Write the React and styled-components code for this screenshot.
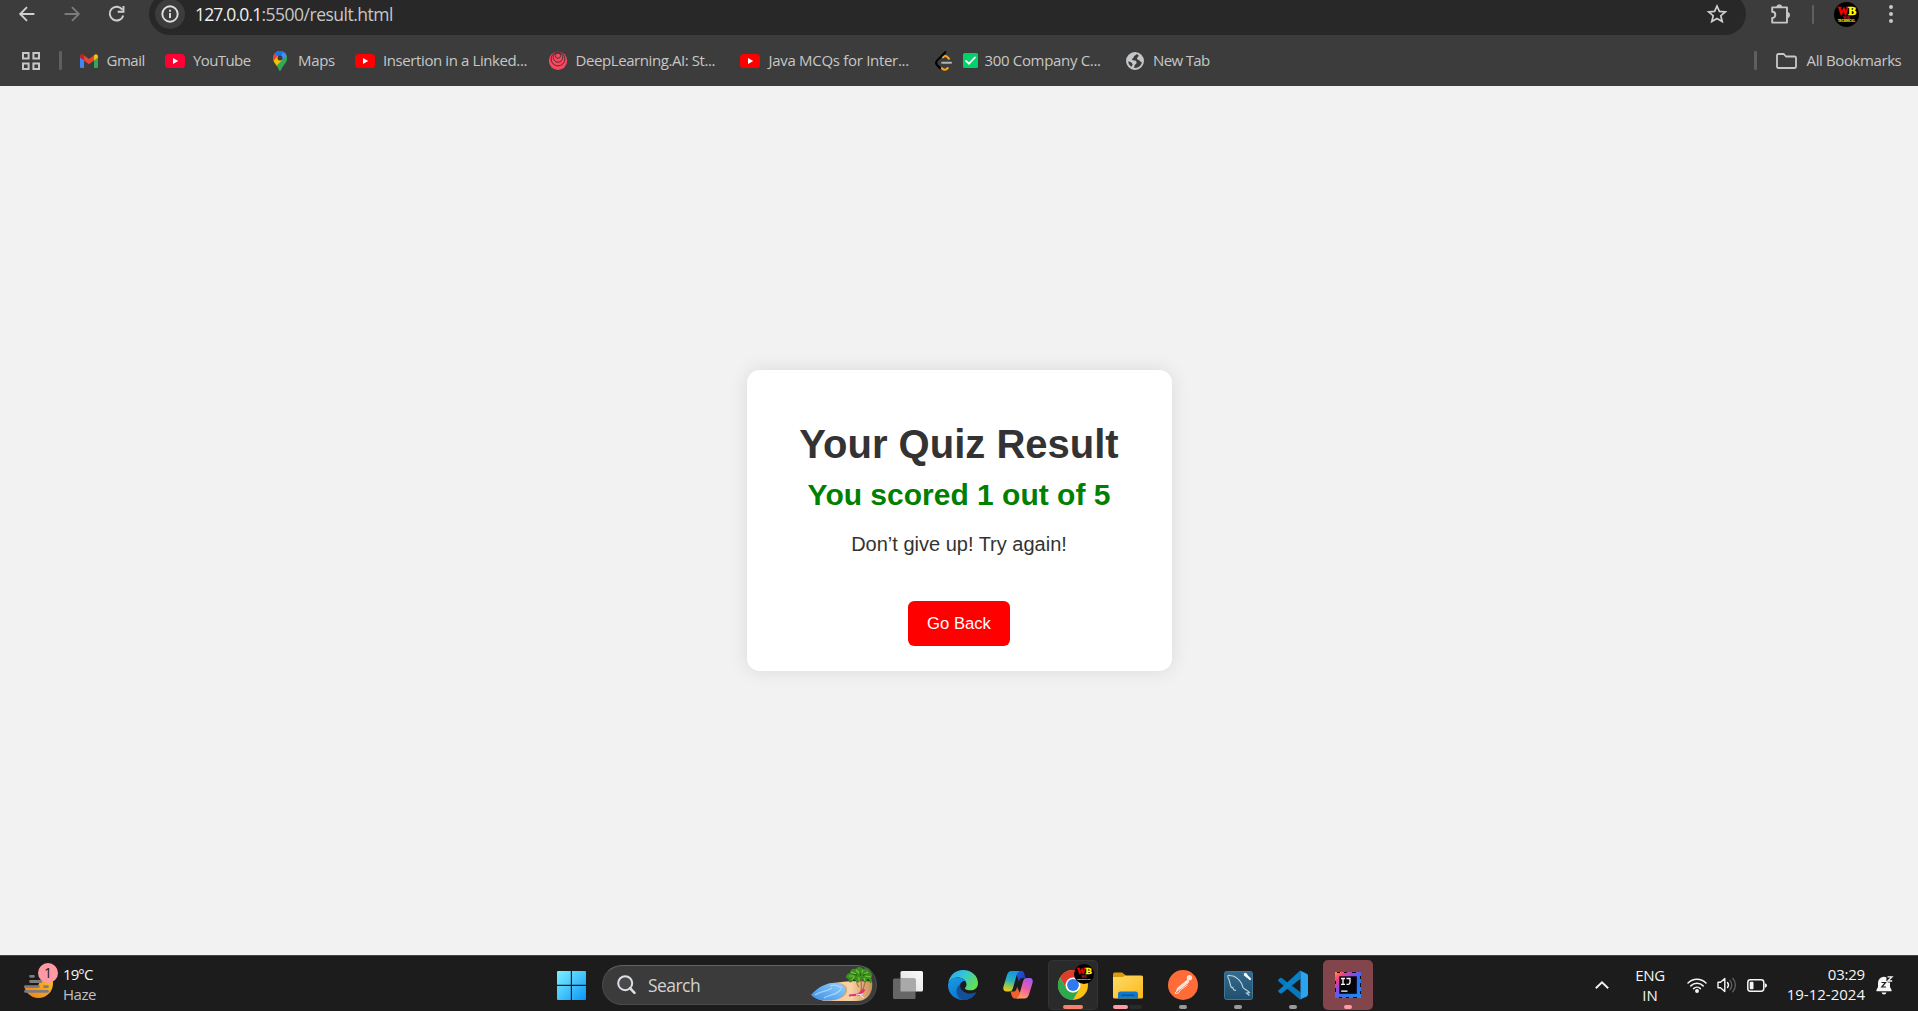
import React from "react";
import styled, { createGlobalStyle } from "styled-components";

const GlobalStyle = createGlobalStyle`
  * { box-sizing: border-box; }
  body { margin: 0; overflow: hidden; background: #f2f2f2; }
  svg { display: block; flex: none; overflow: visible; }
`;

const Screen = styled.div`
  width: 100vw;
  height: 100vh;
  display: flex;
  flex-direction: column;
  font-family: "Open Sans", "Noto Sans", sans-serif;
`;

/* ---------- browser chrome ---------- */

const BrowserBar = styled.header`
  flex: none;
  height: 86px;
  background: #3c3c3c;
  overflow: hidden;
`;

const Toolbar = styled.div`
  display: flex;
  align-items: center;
  height: 28px;
  padding-left: 4px;
`;

const NavButton = styled.div`
  flex: none;
  width: 45px;
  display: flex;
  justify-content: center;
  color: ${(p) => (p.$disabled ? "#7b7b7b" : "#d0d0d0")};
`;

const Omnibox = styled.div`
  flex: none;
  width: 1597px;
  height: 42px;
  margin-left: 10px;
  padding: 0 17px 0 6px;
  border-radius: 21px;
  background: #282828;
  display: flex;
  align-items: center;
`;

const SiteInfo = styled.div`
  width: 30px;
  height: 30px;
  border-radius: 50%;
  background: #3c3c3c;
  display: flex;
  align-items: center;
  justify-content: center;
`;

const Label = styled.span`
  flex: none;
  white-space: pre;
  font-size: ${(p) => p.$size || 15}px;
  line-height: 20px;
  letter-spacing: ${(p) => p.$track || 0}px;
  color: ${(p) => p.$color || "#c7c7c7"};
`;

const Url = styled.div`
  flex: 1;
  margin-left: 10px;
  display: flex;
`;

const Slot = styled.div`
  flex: none;
  width: ${(p) => p.$w}px;
  margin-left: ${(p) => p.$ml || 0}px;
  display: flex;
  justify-content: center;
`;

const Divider = styled.div`
  flex: none;
  width: ${(p) => p.$w}px;
  height: 19px;
  margin-left: ${(p) => p.$ml}px;
  border-radius: 1px;
  background: #5f5f5f;
`;

const BookmarksBar = styled.nav`
  display: flex;
  align-items: center;
  height: 58px;
  padding: 7px 0 0 22px;
`;

const BookmarkList = styled.div`
  display: flex;
  flex: 1;
  margin-left: 18px;
`;

const Bookmark = styled.div`
  flex: none;
  width: ${(p) => p.$w}px;
  height: 20px;
  display: flex;
  align-items: center;

  ${Label} {
    margin-bottom: 2px;
  }
`;

const BookmarkIcon = styled.div`
  flex: none;
  width: ${(p) => p.$w}px;
`;

/* ---------- page ---------- */

const Page = styled.main`
  flex: 1;
  display: flex;
  align-items: center;
  justify-content: center;
  background: #f2f2f2;
  font-family: "Liberation Sans", Arial, sans-serif;
  color: #333;
`;

const Card = styled.section`
  width: 425px;
  height: 301px;
  padding-top: 51px;
  border-radius: 12.5px;
  background: #fff;
  box-shadow: 0 0 18.75px rgba(0, 0, 0, 0.1);
  text-align: center;
`;

const Title = styled.h1`
  margin: 0;
  font-size: 40px;
  line-height: 46px;
`;

const Score = styled.p`
  margin: 11px 0 0;
  font-size: 30px;
  line-height: 34px;
  font-weight: 700;
  color: green;
`;

const Message = styled.p`
  margin: 21px 0 0;
  font-size: 20px;
  line-height: 23px;
`;

const BackButton = styled.button`
  width: 102px;
  height: 45px;
  margin-top: 45px;
  padding: 0;
  border: 0;
  border-radius: 6.25px;
  background: #f00;
  color: #fff;
  font: 16.6667px/19px "Liberation Sans", Arial, sans-serif;
`;

/* ---------- taskbar ---------- */

const TaskbarRow = styled.footer`
  flex: none;
  height: 56px;
  padding: 3px 25px 0 19px;
  border-top: 1px solid #424544;
  background: #1c1c1c;
  display: flex;
  align-items: center;
`;

const Weather = styled.div`
  flex: none;
  width: 538px;
  display: flex;
  align-items: center;
`;

const WeatherIcon = styled.div`
  position: relative;
  width: 44px;
  height: 40px;
`;

const CountBadge = styled.div`
  position: absolute;
  left: 19px;
  top: -2px;
  width: 20px;
  height: 20px;
  border-radius: 50%;
  background: #ff99a4;
  color: #1c1c1c;
  font-size: 14px;
  line-height: 20px;
  text-align: center;
`;

const Lines = styled.div`
  display: flex;
  flex-direction: column;
  align-items: ${(p) => p.$align || "flex-start"};
  width: ${(p) => (p.$w ? `${p.$w}px` : "auto")};
  margin: 0 0 ${(p) => p.$mb || 0}px ${(p) => p.$ml || 0}px;
`;

const SearchBox = styled.div`
  flex: none;
  width: 275px;
  height: 40px;
  margin-left: 16px;
  border: 1px solid #4a4a4a;
  border-top-color: #626262;
  border-radius: 20px;
  background: #3b3b3b;
  display: flex;
  align-items: center;
  padding: 0 2px 0 14px;
  overflow: hidden;
`;

const SearchText = styled.div`
  flex: 1;
  margin-left: 12px;
  display: flex;
`;

const Apps = styled.div`
  display: flex;
  gap: 5px;
  margin-left: 6px;
`;

const AppTile = styled.div`
  position: relative;
  width: 50px;
  height: 50px;
  border-radius: 5px;
  background: ${(p) => p.$bg || "transparent"};
  box-shadow: ${(p) => (p.$ring ? "inset 0 0 0 1px #343434" : "none")};
  display: flex;
  align-items: center;
  justify-content: center;
`;

const Indicator = styled.div`
  position: absolute;
  bottom: 1px;
  left: ${(p) => p.$left}px;
  width: ${(p) => p.$w}px;
  height: 4px;
  border-radius: 2px;
  background: ${(p) => p.$color};
`;

const TileBadge = styled.div`
  position: absolute;
  left: 26px;
  top: 4px;
`;

const Tray = styled.div`
  flex: none;
  margin-left: auto;
  display: flex;
  align-items: center;
`;

/* ---------- icons ---------- */

const BackIcon = () => (
  <svg width="16" height="16" viewBox="0 0 16 16" fill="none" stroke="currentColor" strokeWidth="1.9">
    <path d="M15.4 8H2M8 1.2 1.2 8 8 14.8" />
  </svg>
);

const ForwardIcon = () => (
  <svg width="16" height="16" viewBox="0 0 16 16" fill="none" stroke="currentColor" strokeWidth="1.9">
    <path d="M.6 8H14M8 1.2 14.8 8 8 14.8" />
  </svg>
);

const ReloadIcon = () => (
  <svg width="16" height="16" viewBox="0 0 16 16" fill="none" stroke="currentColor" strokeWidth="1.9">
    <path d="M13.4 3.8A6.9 6.9 0 1 0 14.3 9.5M14.5 0V5.8H8.7" />
  </svg>
);

const InfoIcon = () => (
  <svg width="18" height="18" viewBox="0 0 18 18" fill="none" stroke="#dedede" strokeWidth="1.9">
    <circle cx="9" cy="9" r="7.7" />
    <path d="M9 8v5M9 4.8v2" />
  </svg>
);

const StarIcon = () => (
  <svg width="20" height="20" viewBox="0 0 20 20" fill="none" stroke="#d0d0d0" strokeWidth="1.7">
    <path d="M10 2 12.4 7.4 18.3 7.9 13.8 11.7 15.2 17.5 10 14.4 4.800 17.500 6.200 11.700 1.700 7.900 7.600 7.400Z" />
  </svg>
);

const PuzzleIcon = () => (
  <svg width="21" height="21" viewBox="0 0 21 21" fill="none">
    <path d="M2.2 3.4H17V18.6H2.2V14a3.1 3.1 0 0 0 0-6.2Z" stroke="#c7c7c7" strokeWidth="1.9" strokeLinejoin="round" />
    <path d="M6.6 3.4a2.7 2.7 0 0 1 5.4 0ZM17 8.3a2.7 2.7 0 0 1 0 5.4Z" fill="#c7c7c7" stroke="#c7c7c7" strokeWidth=".7" />
  </svg>
);

const DotsIcon = () => (
  <svg width="4" height="20" viewBox="0 0 4 20" fill="#c7c7c7">
    <circle cx="2" cy="3" r="2" />
    <circle cx="2" cy="10" r="2" />
    <circle cx="2" cy="17" r="2" />
  </svg>
);

const Avatar = ({ size }) => (
  <svg width={size} height={size} viewBox="0 0 25 25" fontFamily="Liberation Serif, serif" fontWeight="700" textAnchor="middle">
    <circle cx="12.5" cy="12.5" r="12.5" fill="#000" />
    <text x="9" y="13" fontSize="11.5" fill="#f00" stroke="#f00" strokeWidth=".5" textLength="11" lengthAdjust="spacingAndGlyphs">W</text>
    <text x="18.3" y="13" fontSize="11.5" fill="#ff0" stroke="#ff0" strokeWidth=".5" textLength="8" lengthAdjust="spacingAndGlyphs">B</text>
    <text x="12.3" y="17.2" fontSize="4" fill="#e02020">WB</text>
    <text x="12.5" y="20.2" fontSize="3" fill="#dddd00" stroke="#dddd00" strokeWidth=".2" textLength="17" lengthAdjust="spacingAndGlyphs">TECHNICAL</text>
  </svg>
);

const AppsIcon = () => (
  <svg width="18" height="18" viewBox="0 0 18 18" fill="none" stroke="#c7c7c7" strokeWidth="2">
    <path d="M1 1h5.6v5.6H1ZM11.4 1H17v5.6h-5.6ZM1 11.4h5.6V17H1ZM11.4 11.4H17V17h-5.6Z" />
  </svg>
);

const GmailIcon = () => (
  <svg width="18" height="14" viewBox="0 0 18 14">
    <path d="M0 2V12.8A1.2 1.2 0 0 0 1.2 14H4V5Z" fill="#4285f4" />
    <path d="M14 14h2.8a1.2 1.2 0 0 0 1.2-1.2V2l-4 3Z" fill="#34a853" />
    <path d="M4 1.2 9 5l5-3.8V6.6L9 10.3 4 6.6Z" fill="#ea4335" />
    <path d="M14 1.2 14.9 .5A2 2 0 0 1 18 2.1V3.6L14 6.6Z" fill="#fbbc04" />
    <path d="M4 1.2 3.2 .5A2 2 0 0 0 0 2.1V3.6L4 6.6Z" fill="#c5221f" />
  </svg>
);

const YouTubeIcon = ({ color }) => (
  <svg width="20" height="14" viewBox="0 0 20 14">
    <rect width="20" height="14" rx="3.6" fill={color} />
    <path d="M8 4.1 13.2 7 8 9.9Z" fill="#fff" />
  </svg>
);

const MapsIcon = () => (
  <svg width="14" height="20" viewBox="0 0 14 20">
    <defs>
      <clipPath id="pin">
        <path d="M7 0a7 7 0 0 0-7 7c0 3 1.5 4.8 3.4 7.2C5 16.3 5.8 18 6.3 19.5c.2.6 1.2.6 1.4 0 .5-1.5 1.3-3.2 2.9-5.3C12.5 11.8 14 10 14 7a7 7 0 0 0-7-7Z" />
      </clipPath>
    </defs>
    <g clipPath="url(#pin)">
      <rect width="14" height="20" fill="#34a853" />
      <path d="M0 0h14v3L7 8 3 5 0 2Z" fill="#4285f4" />
      <path d="M0 2 4.5 5.2 1 10H0Z" fill="#ea4335" />
      <path d="M0 10.500 4.500 5 9.500 9 3.500 15.500Z" fill="#fbbc04" />
      <path d="M4 0H12L7 5.5 4.5 5.200 1.700 2.500Z" fill="#1a73e8" />
      <path d="M9 2 12.5 1.5 14 5 9 10Z" fill="#4a8cf6" />
      <path d="M9 9.500 14 4.500V14L6 20 3.4 15Z" fill="#34a853" />
    </g>
    <circle cx="7" cy="7" r="2.5" fill="#3c3c3c" />
  </svg>
);

const SwirlIcon = () => (
  <svg width="18" height="19" viewBox="0 0 18 19">
    <circle cx="9" cy="9.8" r="9.2" fill="#f9475f" />
    <g fill="none" stroke="#4a3338" strokeWidth="1">
      <circle cx="9" cy="8" r="6.9" />
      <circle cx="9" cy="6.4" r="4.8" />
      <circle cx="9" cy="4.7" r="2.6" />
    </g>
  </svg>
);

const LeetIcon = () => (
  <svg width="18" height="20" viewBox="0 0 18 20" fill="none" strokeLinecap="round" strokeWidth="2.1">
    <path d="M6.8 17.2C8.5 19.3 11 19.3 12.8 17M8 6.2C9.8 4.6 11.3 4.6 12.8 6.5L14 7.700" stroke="#ffa116" />
    <path d="M10.3 1.2 2 9.6C.8 11 .8 12.5 2 14L5 17.2" stroke="#000" />
    <path d="M7.2 11.8H16" stroke="#b3b3b3" />
  </svg>
);

const CheckIcon = () => (
  <svg width="15" height="15" viewBox="0 0 15 15">
    <rect width="15" height="15" rx="1.5" fill="#00d26a" />
    <path d="M3 7.8 6 10.7 12 4.3" fill="none" stroke="#fff" strokeWidth="1.7" strokeLinecap="round" />
  </svg>
);

const GlobeIcon = () => (
  <svg width="18" height="18" viewBox="0 0 18 18">
    <circle cx="9" cy="9" r="8" fill="#3c3c3c" stroke="#c4c7c9" strokeWidth="2" />
    <path d="M1 8.500C1.500 4 4.500 1.300 9 1 10.800 1.200 10.300 3 9 3.600 7.300 4.200 8.300 5.600 7 6.300 5.600 6.800 5.600 8 7 8.200 9.500 8.400 10.800 8.800 10.600 10.800 10.400 12.600 8.800 12 8.400 14 8.200 15.500 8 16.500 7.500 17 3.500 16 1 12.500 1 8.500Z" fill="#c4c7c9" />
    <path d="M2.200 9.300 5.500 10.500 6.600 12.500 5.600 14.800C3.600 13.600 2.300 11.600 2.200 9.300Z" fill="#3c3c3c" />
    <path d="M17 9.500C15.500 10.600 14.300 9.800 13.500 8.500 12.500 7.300 11 7.800 10.900 6.400 10.900 5 12.600 5.200 12.600 3.700 12.600 2.700 13 2.500 13.500 2.300 16 4 17.300 6.500 17 9.500Z" fill="#c4c7c9" />
  </svg>
);

const FolderIcon = () => (
  <svg width="21" height="16" viewBox="0 0 21 16" fill="none" stroke="#c7c7c7" strokeWidth="1.8" strokeLinejoin="round">
    <path d="M2.5 1H7.8L10 3.5H18.5A1.4 1.4 0 0 1 20 5V13.5A1.4 1.4 0 0 1 18.5 15H2.5A1.4 1.4 0 0 1 1 13.5V2.5A1.4 1.4 0 0 1 2.5 1Z" />
  </svg>
);

const HazeIcon = () => (
  <svg width="40" height="40" viewBox="0 0 40 40">
    <defs>
      <linearGradient id="sun" x1="1" y1="0" x2="0" y2="1">
        <stop offset="0" stopColor="#ffc928" />
        <stop offset="1" stopColor="#f37a1d" />
      </linearGradient>
    </defs>
    <circle cx="19.5" cy="18.5" r="14.5" fill="url(#sun)" />
    <path d="M0 0H40V16H21L19 21H0Z" fill="#1c1c1c" />
    <g stroke="#7c7c7c" strokeWidth="2.8" strokeLinecap="round">
      <path d="M11.5 11.3H14.5M11.5 16.5H22M6.5 21.6H19.5M25.5 21.6H28.5M6.5 26.4H28.5" />
    </g>
  </svg>
);

const WindowsIcon = () => (
  <svg width="29" height="29" viewBox="0 0 29 29">
    <defs>
      <linearGradient id="win" x1="0" y1="0" x2="1" y2="1">
        <stop offset="0" stopColor="#7df0fe" />
        <stop offset=".55" stopColor="#3fc0fc" />
        <stop offset="1" stopColor="#0594fb" />
      </linearGradient>
    </defs>
    <path d="M1 0H13.8V13.8H0V1Q0 0 1 0ZM15 0H28Q29 0 29 1V13.8H15ZM0 15H13.8V29H1Q0 29 0 28ZM15 15H29V28Q29 29 28 29H15Z" fill="url(#win)" />
  </svg>
);

const SearchIcon = () => (
  <svg width="19" height="20" viewBox="0 0 19 20" fill="none" stroke="#dcdfe6">
    <circle cx="8.2" cy="8.2" r="7" strokeWidth="2" fill="#4a4a4a" />
    <path d="M13 13.2 17.5 17.8" strokeWidth="2.6" strokeLinecap="round" />
  </svg>
);

const BeachIcon = () => (
  <svg width="64" height="36" viewBox="0 0 64 36">
    <defs>
      <linearGradient id="sand" x1="0" y1="0" x2="1" y2="0">
        <stop offset="0" stopColor="#eec195" />
        <stop offset=".6" stopColor="#f8d2a6" />
        <stop offset="1" stopColor="#c98f55" />
      </linearGradient>
      <linearGradient id="sea" x1="0" y1="1" x2="1" y2="0">
        <stop offset="0" stopColor="#3d8ee8" />
        <stop offset="1" stopColor="#8fd0fa" />
      </linearGradient>
    </defs>
    <path d="M22 16.5C32 14 45 14 62 14.5 63 22 61 28 55 32 52 34 48 34 44 34H14L8 32Z" fill="url(#sand)" />
    <path d="M25 16C33 15.5 38 19 37 24 36 30 28 34 14 33.5Z" fill="#c9935b" opacity=".7" />
    <path d="M1 28C8 20 18 15 27 16 35 17 37 22 34 27 31 33 22 34 14 33.5 8 33 4 31 1 28Z" fill="url(#sea)" />
    <path d="M5 28C12 23 17 25 22 21M14 31C20 27 26 29 31 22M20 19C25 17 29 19 32 21" fill="none" stroke="#b7e0fb" strokeWidth="1.3" opacity=".75" />
    <path d="M47 12C46 16 47 18 49 20M51 12C51 17 52 20 51 24M56 12C55 17 53 20 53 24" fill="none" stroke="#a7763e" strokeWidth="1.2" />
    <path d="M36 11C36 7 39 6 40 6 40 2 44 1 46 2 48-1 52 0 53 2 56 0 59 2 59 4 62 5 63 9 61 11 63 13 62 17 60 16 60 14 58 12 57 12 57 15 55 16 54 15 53 12 51 11 50 12 50 15 48 17 47 15 46 13 44 12 43 12 43 15 40 16 39 15 39 12 38 11 36 11Z" fill="#3b8f1e" />
    <path d="M41 5 46 7M46 3 49 6M53 3 51 7M58 5 54 7M39 9 45 9M55 9 61 10M44 10 42 13M49 10V14M54 11 55 14" stroke="#78c83c" strokeWidth="1.1" />
    <path d="M43 7.500 47 8M51 5 50.500 9M56 7 53 8.500M58 12 60 14" stroke="#1f5f10" strokeWidth="1" />
    <path d="M39 27.5 48 26.5 53 21.5 55.5 23 51 28.5 39 29.5Z" fill="#e8307e" />
    <path d="M41 29.5 43 31M50 28 54 31M46 28 53 27" stroke="#f4f0f2" strokeWidth="1" />
  </svg>
);

const TaskViewIcon = () => (
  <svg width="30" height="28" viewBox="0 0 30 28">
    <defs>
      <linearGradient id="tv" x1="0" y1="1" x2="1" y2="0">
        <stop offset="0" stopColor="#dedede" />
        <stop offset="1" stopColor="#fafafa" />
      </linearGradient>
    </defs>
    <rect x="7.5" y="0" width="22.5" height="20.5" rx="1.5" fill="url(#tv)" />
    <rect x="0" y="7.5" width="22.5" height="20.5" rx="1.5" fill="#666" />
    <rect x="7.5" y="7.5" width="15" height="13" fill="#a9a9a9" />
  </svg>
);

const EdgeIcon = () => (
  <svg width="30" height="30" viewBox="0 0 24 24">
    <defs>
      <linearGradient id="edgeTop" x1="0" y1="0" x2="1" y2=".5">
        <stop offset="0" stopColor="#2aa6ee" />
        <stop offset=".5" stopColor="#33c5d8" />
        <stop offset="1" stopColor="#63de58" />
      </linearGradient>
      <linearGradient id="edgeLeft" x1="0" y1="0" x2=".6" y2="1">
        <stop offset="0" stopColor="#1b9de2" />
        <stop offset="1" stopColor="#0a6fd0" />
      </linearGradient>
    </defs>
    <path d="M.2 10.5C1.2 4 6 0 12 0 19 0 24 4.8 24 10.5 24 14 21.3 16.2 18 16.2 15 16.2 13.3 15 13.6 14.3 14.5 13.2 14.8 12.5 14.8 11.5 14.8 8 11 5.9 7.8 5.9 4 5.9 1.5 8 .2 10.5Z" fill="url(#edgeTop)" />
    <path d="M0 12C.5 8.5 3.5 5.9 7.8 5.9 10.5 5.9 13 7.2 14.2 9 12.5 8.4 9.6 9.5 9.6 13 9.6 17.5 13.5 21 17.6 20.5 19.5 20.3 21 19.5 22 18.7 20 22 16.3 24 12 24 5.5 24-.2 18.7 0 12Z" fill="url(#edgeLeft)" />
    <path d="M9.9 11.4C8 12.5 6.8 14.5 6.8 17 6.8 20 9 23.4 12.4 24 16.5 24 20 22 22.2 18.5 22.5 17.8 22 17.6 21.5 17.9 17 20 11 18 9.7 13.5Z" fill="#144f97" />
  </svg>
);

const CopilotIcon = () => (
  <svg width="30" height="28" viewBox="0 0 30 28">
    <defs>
      <linearGradient id="cpA" x1=".4" y1="0" x2=".2" y2="1">
        <stop offset="0" stopColor="#1795e8" />
        <stop offset=".45" stopColor="#2bb3b5" />
        <stop offset=".75" stopColor="#9fc94a" />
        <stop offset="1" stopColor="#f5c912" />
      </linearGradient>
      <linearGradient id="cpB" x1=".8" y1="0" x2=".4" y2="1">
        <stop offset="0" stopColor="#a25af0" />
        <stop offset=".5" stopColor="#ec5aa8" />
        <stop offset="1" stopColor="#fda163" />
      </linearGradient>
      <linearGradient id="cpC" x1="0" y1="0" x2="1" y2="1">
        <stop offset="0" stopColor="#1a5fd8" />
        <stop offset="1" stopColor="#2433c4" />
      </linearGradient>
    </defs>
    <path d="M13 0H18.5C20.5 0 21 1.5 21.5 3.5L22.5 7H19.5C17 7 16.500 9 16 11L14 5Z" fill="url(#cpC)" />
    <path d="M7.5 20.5H11C13 20.5 13.5 18 14 16L17 22 16 27.5H12C9.5 27.5 8.8 25 8.2 23Z" fill="#f1602f" />
    <path d="M8.5 0H17C14.5 .5 13.9 3 13.2 5.5L10 17C9.2 19.5 8.5 20.5 6 20.5H3.5C.8 20.5-.3 18.5.5 15.5L4 4C5 1.2 6 0 8.5 0Z" fill="url(#cpA)" />
    <path d="M21.5 27.5H13C15.5 27 16.1 24.5 16.8 22L20 10.5C20.8 8 21.5 7 24 7H26.5C29.2 7 30.3 9 29.5 12L26 23.5C25 26.3 24 27.5 21.5 27.5Z" fill="url(#cpB)" />
  </svg>
);

const ChromeIcon = () => (
  <svg width="30" height="30" viewBox="0 0 30 30">
    <circle cx="15" cy="15" r="15" fill="#fbc116" />
    <path d="M2 7.5A15 15 0 0 1 28 7.5H15L8.5 18.7Z" fill="#e33b2e" />
    <path d="M2 7.5 8.5 18.7A7.5 7.5 0 0 0 15 22.5 7.5 7.5 0 0 0 21.5 18.7L15 30A15 15 0 0 1 2 7.5Z" fill="#2da94f" />
    <circle cx="15" cy="15" r="7.5" fill="#fff" />
    <circle cx="15" cy="15" r="5.9" fill="#3079f0" />
  </svg>
);

const ExplorerIcon = () => (
  <svg width="30" height="27" viewBox="0 0 30 27">
    <defs>
      <linearGradient id="fold" x1="0" y1="0" x2="1" y2="1">
        <stop offset="0" stopColor="#ffdb6b" />
        <stop offset="1" stopColor="#fbb917" />
      </linearGradient>
    </defs>
    <path d="M0 2.5Q0 .5 1.5 .5H9L13 3.5V8H0Z" fill="#dd9b04" />
    <path d="M0 5H9.5L13 3.5H28.5Q30 3.5 30 5V25Q30 26.5 28.5 26.5H1.5Q0 26.5 0 25Z" fill="url(#fold)" />
    <path d="M5 26.5V22Q5 19.5 7.5 19.5H22.5Q25 19.5 25 22V26.5Z" fill="#0f77cf" />
    <path d="M8.5 23.2H21.5" stroke="#0b4f91" strokeWidth="1.3" />
  </svg>
);

const PostmanIcon = () => (
  <svg width="30" height="30" viewBox="0 0 30 30">
    <circle cx="15" cy="15" r="15" fill="#ff6c37" />
    <circle cx="21.5" cy="7.8" r="2.7" fill="#fbe3d8" />
    <path d="M20 9.5 9.5 18 8.5 21.5 20.5 12.5Z" fill="#fbe3d8" stroke="#fbe3d8" strokeWidth="1" />
    <path d="M9.5 20.5 6.8 23.3H10L13 19.5 19.5 15" fill="none" stroke="#fbe3d8" strokeWidth="1" />
  </svg>
);

const MysqlIcon = () => (
  <svg width="29" height="29" viewBox="0 0 29 29">
    <defs>
      <linearGradient id="sql" x1="0" y1="0" x2="0" y2="1">
        <stop offset="0" stopColor="#336b8e" />
        <stop offset="1" stopColor="#20506f" />
      </linearGradient>
    </defs>
    <rect x=".5" y=".5" width="28" height="28" rx="2" fill="url(#sql)" stroke="#3f7595" />
    <path d="M12 19C10.500 20 9 18.500 8.800 16.500 7.500 17.500 7 16 6.300 13.500 5.500 11 5.500 9 4 6.500 3.200 4.500 4.500 3.800 6 4.600 8 5 9.5 4.5 12 6.5 16 9 18 12.500 19 16.500 20.500 18.500 24 19.5 25.5 21.5L22.500 22 25.5 24.5" fill="none" stroke="#c3d5e0" strokeWidth="1.100" />
    <path d="M21 3 26 8" stroke="#fff" strokeWidth="2.2" strokeLinecap="round" />
    <path d="M20 3.5 22.5 5.5 22.5 2.5" stroke="#fff" strokeWidth="1.4" fill="none" />
  </svg>
);

const VscodeIcon = () => (
  <svg width="30" height="30" viewBox="0 0 24 24">
    <path d="M.3 7.6 1.6 6.4A1.1 1.1 0 0 1 3 6.4L18 17.7V24L.3 8.900A.9.9 0 0 1 .3 7.600Z" fill="#0878bd" />
    <path d="M.3 16.3A.9.9 0 0 0 .4 17.4L1.6 18.5A1.1 1.1 0 0 0 3 18.5L18 7V.2Z" fill="#0a80c9" />
    <path d="M17.2 .2 23 2.9A1.8 1.8 0 0 1 24 4.4V19.6A1.8 1.8 0 0 1 23 21.1L17.2 23.8C18 23.5 18 23 18 22.5V1.5C18 1 18 .5 17.2 .2Z" fill="#2aa4f0" />
  </svg>
);

const IdeaIcon = () => (
  <svg width="26" height="26" viewBox="0 0 26 26">
    <defs>
      <linearGradient id="ij" x1="0" y1="0" x2="1" y2="1">
        <stop offset="0" stopColor="#ff9a2b" />
        <stop offset=".2" stopColor="#f5388a" />
        <stop offset=".42" stopColor="#7a50ee" />
        <stop offset=".6" stopColor="#2b74f0" />
        <stop offset="1" stopColor="#1c8cf5" />
      </linearGradient>
    </defs>
    <rect width="26" height="26" fill="url(#ij)" />
    <path d="M2 .5H5M9 .5H12M17 .5H21M.5 9V12M.5 16V20M25.500 4V7M25.500 11V15M25.500 19V22M4 25.500H7M11 25.500H14M18 25.500H22" stroke="#0b0b18" strokeWidth="1" />
    <rect x="4.3" y="4.3" width="17.5" height="17.5" fill="#08050a" />
    <path d="M6 6.500H10M8 6.500V12.300M6 12.300H10M11.500 6.500H15V10.600Q15 12.300 13.200 12.300H11.500M6.200 19.200H12.500" fill="none" stroke="#fff" strokeWidth="1.300" />
  </svg>
);

const ChevronUpIcon = () => (
  <svg width="14" height="8" viewBox="0 0 14 8" fill="none" stroke="#f2f2f2" strokeWidth="1.9">
    <path d="M.8 7.2 7 1.3 13.2 7.2" />
  </svg>
);

const WifiIcon = () => (
  <svg width="20" height="16" viewBox="0 0 20 16" fill="none" stroke="#f5f5f5" strokeWidth="1.5" strokeLinecap="round">
    <path d="M1 6A12.7 12.7 0 0 1 19 6M3.8 8.9A8.7 8.7 0 0 1 16.2 8.9M6.6 11.6A4.9 4.9 0 0 1 13.4 11.6" />
    <circle cx="10" cy="14" r="1.2" fill="#f5f5f5" />
  </svg>
);

const SpeakerIcon = () => (
  <svg width="20" height="16" viewBox="0 0 20 16" fill="none" stroke="#f5f5f5" strokeWidth="1.4" strokeLinecap="round" strokeLinejoin="round">
    <path d="M1 5.2H3.5L7.8 1.5V14.5L3.5 10.8H1Z" />
    <path d="M10.5 5.5A4 4 0 0 1 10.5 10.5" />
    <path d="M13 3.4A7 7 0 0 1 13 12.6M15.8 1.3A10 10 0 0 1 15.8 14.7" stroke="#5c5c5c" />
  </svg>
);

const BatteryIcon = () => (
  <svg width="20" height="13" viewBox="0 0 20 13">
    <rect x=".8" y=".8" width="16" height="11.4" rx="2.6" fill="none" stroke="#f5f5f5" strokeWidth="1.5" />
    <rect x="2.7" y="2.7" width="3.8" height="7.6" rx="1" fill="#f5f5f5" />
    <path d="M17.8 4.3Q20 4.6 20 6.5T17.8 8.7Z" fill="#f5f5f5" />
  </svg>
);

const BellIcon = () => (
  <svg width="17" height="19" viewBox="0 0 17 19">
    <path d="M8 .8A6 6 0 0 0 2 6.8V11L.3 14.3Q.2 15.2 1 15.2H15Q15.9 15.2 15.7 14.3L14 11V6.8A6 6 0 0 0 8 .8ZM5.5 16.5A2.6 2.6 0 0 0 10.5 16.5Z" fill="#f5f5f5" />
    <path d="M10.400 -.8H17.400V6.400H12L10.400 5Z" fill="#1c1c1c" />
    <path d="M11.5 .8H16L11.8 5H16.2" fill="none" stroke="#f5f5f5" strokeWidth="1.3" />
    <path d="M5.5 6.500H9.500L5.800 11H10" fill="none" stroke="#1c1c1c" strokeWidth="1.2" />
  </svg>
);

/* ---------- data ---------- */

const bookmarks = [
  { text: "Gmail", w: 85, pad: 26.5, track: -0.5, icon: <GmailIcon /> },
  { text: "YouTube", w: 108, pad: 28, track: -0.6, icon: <YouTubeIcon color="#ff0033" /> },
  { text: "Maps", w: 82, pad: 25, track: -0.3, icon: <MapsIcon /> },
  { text: "Insertion in a Linked...", w: 194, pad: 28, track: -0.4, icon: <YouTubeIcon color="#ff0000" /> },
  { text: "DeepLearning.AI: St...", w: 191, pad: 26.5, track: -0.42, icon: <SwirlIcon /> },
  { text: "Java MCQs for Inter...", w: 195, pad: 28.5, track: -0.3, icon: <YouTubeIcon color="#ff0000" /> },
  { text: "300 Company C...", w: 191, pad: 28, track: -0.33, icon: <LeetIcon />, check: true },
  { text: "New Tab", w: 90, pad: 27, track: -0.65, icon: <GlobeIcon /> },
];

const WHITE = "#f5f5f5";

const apps = [
  { id: "taskview", icon: <TaskViewIcon /> },
  { id: "edge", icon: <EdgeIcon /> },
  { id: "copilot", icon: <CopilotIcon /> },
  { id: "chrome", icon: <ChromeIcon />, bg: "#2a2a2a", ring: true, badge: true, marks: [[15, 20, "#f4836a"]] },
  { id: "explorer", icon: <ExplorerIcon />, marks: [[10, 15, "#ff99a4"], [26, 13, "#2a2a2a"]] },
  { id: "postman", icon: <PostmanIcon />, marks: [[21, 8, "#9a9a9a"]] },
  { id: "mysql", icon: <MysqlIcon />, marks: [[21, 8, "#9a9a9a"]] },
  { id: "vscode", icon: <VscodeIcon />, marks: [[21, 8, "#9a9a9a"]] },
  { id: "idea", icon: <IdeaIcon />, bg: "#81454b", marks: [[21, 8, "#ff99a4"]] },
];

export default function App() {
  return (
    <Screen>
      <GlobalStyle />
      <BrowserBar>
        <Toolbar>
          <NavButton><BackIcon /></NavButton>
          <NavButton $disabled><ForwardIcon /></NavButton>
          <NavButton><ReloadIcon /></NavButton>
          <Omnibox>
            <SiteInfo><InfoIcon /></SiteInfo>
            <Url>
              <Label $size={17.5} $track={-0.82} $color="#f0f0f0">127.0.0.1</Label>
              <Label $size={17.5} $track={-0.5}>:5500/result.html</Label>
            </Url>
            <Slot $w={24}><StarIcon /></Slot>
          </Omnibox>
          <Slot $w={24} $ml={22}><PuzzleIcon /></Slot>
          <Divider $w={2} $ml={20} />
          <Slot $w={25} $ml={20}><Avatar size={25} /></Slot>
          <Slot $w={24} $ml={20}><DotsIcon /></Slot>
        </Toolbar>
        <BookmarksBar>
          <AppsIcon />
          <Divider $w={3} $ml={19} />
          <BookmarkList>
            {bookmarks.map((b) => (
              <Bookmark key={b.text} $w={b.w}>
                <BookmarkIcon $w={b.pad}>{b.icon}</BookmarkIcon>
                {b.check && <BookmarkIcon $w={21.5}><CheckIcon /></BookmarkIcon>}
                <Label $track={b.track}>{b.text}</Label>
              </Bookmark>
            ))}
          </BookmarkList>
          <Divider $w={3} $ml={0} />
          <Bookmark $w={161}>
            <Slot $w={21} $ml={19}><FolderIcon /></Slot>
            <Slot $w={96} $ml={9}><Label $track={-0.4}>All Bookmarks</Label></Slot>
          </Bookmark>
        </BookmarksBar>
      </BrowserBar>

      <Page>
        <Card>
          <Title>Your Quiz Result</Title>
          <Score>You scored 1 out of 5</Score>
          <Message>Don’t give up! Try again!</Message>
          <BackButton>Go Back</BackButton>
        </Card>
      </Page>

      <TaskbarRow>
        <Weather>
          <WeatherIcon>
            <HazeIcon />
            <CountBadge>1</CountBadge>
          </WeatherIcon>
          <Lines $mb={3}>
            <Label $track={-0.9} $color={WHITE}>19°C</Label>
            <Label $track={-0.5} $color="#c0c0c0">Haze</Label>
          </Lines>
        </Weather>
        <WindowsIcon />
        <SearchBox>
          <SearchIcon />
          <SearchText><Label $size={17.5} $track={-0.55} $color="#d2d2d2">Search</Label></SearchText>
          <BeachIcon />
        </SearchBox>
        <Apps>
          {apps.map((a) => (
            <AppTile key={a.id} $bg={a.bg} $ring={a.ring}>
              {a.icon}
              {a.badge && <TileBadge><Avatar size={20} /></TileBadge>}
              {(a.marks || []).map(([left, w, color]) => (
                <Indicator key={left} $left={left} $w={w} $color={color} />
              ))}
            </AppTile>
          ))}
        </Apps>
        <Tray>
          <ChevronUpIcon />
          <Lines $align="center" $w={40} $ml={21} $mb={1}>
            <Label $track={-0.4} $color={WHITE}>ENG</Label>
            <Label $color={WHITE}>IN</Label>
          </Lines>
          <Slot $w={20} $ml={17}><WifiIcon /></Slot>
          <Slot $w={20} $ml={10}><SpeakerIcon /></Slot>
          <Slot $w={20} $ml={10}><BatteryIcon /></Slot>
          <Lines $align="flex-end" $w={98} $mb={3}>
            <Label $track={-0.2} $color={WHITE}>03:29</Label>
            <Label $color={WHITE}>19-12-2024</Label>
          </Lines>
          <Slot $w={17} $ml={11}><BellIcon /></Slot>
        </Tray>
      </TaskbarRow>
    </Screen>
  );
}
